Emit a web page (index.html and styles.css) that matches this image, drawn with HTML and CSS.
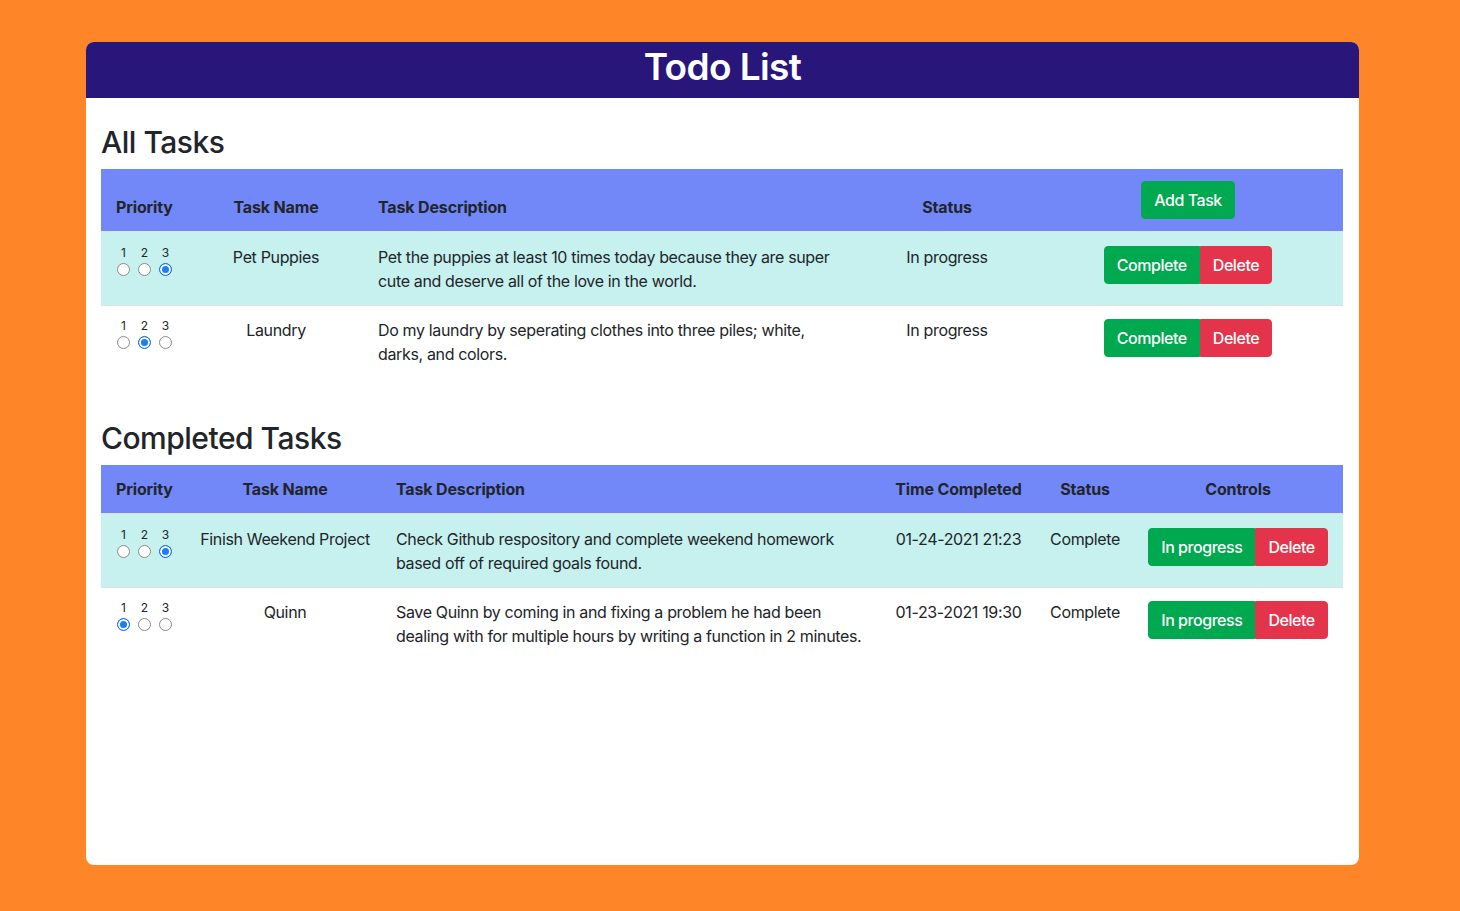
FILE: index.html
```html
<!DOCTYPE html>
<html>
<head>
<meta charset="utf-8">
<link rel="stylesheet" href="styles.css">
</head>
<body>
<div class="card">
  <header class="card-head"><h1>Todo List</h1></header>
  <div class="card-body">
    <section class="section">
      <h2>All Tasks</h2>
      <table class="tasks">
        <colgroup><col style="width:88px"><col style="width:174px"><col style="width:498px"><col style="width:172px"><col style="width:310px"></colgroup>
        <thead>
          <tr><th>Priority</th><th class="c">Task Name</th><th>Task Description</th><th class="c">Status</th><th class="c"><button class="btn green">Add Task</button></th></tr>
        </thead>
        <tbody>
          <tr class="hl">
            <td><div class="prio"><label class="opt"><span>1</span><input type="radio" name="a1"></label><label class="opt"><span>2</span><input type="radio" name="a1"></label><label class="opt"><span>3</span><input type="radio" name="a1" checked></label></div></td>
            <td class="c nw">Pet Puppies</td>
            <td>Pet the puppies at least 10 times today because they are super cute and deserve all of the love in the world.</td>
            <td class="c nw">In progress</td>
            <td class="c"><div class="grp"><button class="btn green">Complete</button><button class="btn red">Delete</button></div></td>
          </tr>
          <tr>
            <td><div class="prio"><label class="opt"><span>1</span><input type="radio" name="a2"></label><label class="opt"><span>2</span><input type="radio" name="a2" checked></label><label class="opt"><span>3</span><input type="radio" name="a2"></label></div></td>
            <td class="c nw">Laundry</td>
            <td>Do my laundry by seperating clothes into three piles; white, darks, and colors.</td>
            <td class="c nw">In progress</td>
            <td class="c"><div class="grp"><button class="btn green">Complete</button><button class="btn red">Delete</button></div></td>
          </tr>
        </tbody>
      </table>
    </section>
    <section class="section">
      <h2>Completed Tasks</h2>
      <table class="tasks">
        <colgroup><col style="width:88px"><col style="width:192px"><col style="width:499px"><col style="width:157px"><col style="width:96px"><col style="width:210px"></colgroup>
        <thead>
          <tr><th>Priority</th><th class="c">Task Name</th><th>Task Description</th><th class="c nw">Time Completed</th><th class="c">Status</th><th class="c">Controls</th></tr>
        </thead>
        <tbody>
          <tr class="hl">
            <td><div class="prio"><label class="opt"><span>1</span><input type="radio" name="b1"></label><label class="opt"><span>2</span><input type="radio" name="b1"></label><label class="opt"><span>3</span><input type="radio" name="b1" checked></label></div></td>
            <td class="c nw tight">Finish Weekend Project</td>
            <td>Check Github respository and complete weekend homework based off of required goals found.</td>
            <td class="c nw">01-24-2021 21:23</td>
            <td class="c nw tight">Complete</td>
            <td class="c"><div class="grp"><button class="btn green">In progress</button><button class="btn red">Delete</button></div></td>
          </tr>
          <tr>
            <td><div class="prio"><label class="opt"><span>1</span><input type="radio" name="b2" checked></label><label class="opt"><span>2</span><input type="radio" name="b2"></label><label class="opt"><span>3</span><input type="radio" name="b2"></label></div></td>
            <td class="c nw tight">Quinn</td>
            <td>Save Quinn by coming in and fixing a problem he had been dealing with for multiple hours by writing a function in 2 minutes.</td>
            <td class="c nw">01-23-2021 19:30</td>
            <td class="c nw tight">Complete</td>
            <td class="c"><div class="grp"><button class="btn green">In progress</button><button class="btn red">Delete</button></div></td>
          </tr>
        </tbody>
      </table>
    </section>
  </div>
</div>
</body>
</html>
```
FILE: styles.css
```css
html, body {
  margin: 0;
  padding: 0;
}
body {
  background: #ff8529;
  font-family: Inter, "Noto Sans", sans-serif;
  font-size: 16px;
  line-height: 24px;
  color: #212529;
  padding: 42px 0 46px 86px;
}
.card {
  width: 1273px;
  height: 823px;
  background: #fff;
  border-radius: 8px;
  overflow: hidden;
}
.card-head {
  background: #29167a;
  height: 56px;
}
.card-head h1 {
  margin: 0;
  text-align: center;
  color: #fff;
  font-size: 37px;
  font-weight: 600;
  line-height: 50px;
  letter-spacing: -0.6px;
}
.card-body {
  padding: 0 16px 0 15px;
}
.section {
  padding-top: 25px;
}
.section h2 {
  margin: 0 0 8px;
  font-size: 30px;
  font-weight: 500;
  line-height: 38px;
  letter-spacing: -0.5px;
}
.tasks {
  width: 1242px;
  table-layout: fixed;
  border-collapse: collapse;
  margin-bottom: 16px;
}
.tasks th, .tasks td {
  padding: 12px 15px;
  text-align: left;
  vertical-align: top;
  letter-spacing: -0.35px;
}
.tasks td {
  padding-top: 13px;
  border-top: 1px solid #dee2e6;
}
.tasks tbody tr:last-child td {
  padding-top: 12px;
}
.tasks th {
  background: #7288f8;
  font-weight: 700;
  vertical-align: bottom;
  letter-spacing: -0.15px;
}
.tasks .c {
  text-align: center;
}
.tasks .nw {
  white-space: nowrap;
}
.tasks .tight {
  padding-left: 6px;
  padding-right: 6px;
}
.tasks tr.hl td {
  background: #c7f1ef;
}
.prio {
  display: flex;
  gap: 8px;
  margin: 1px 0 0 1px;
}
.opt {
  display: flex;
  flex-direction: column;
  align-items: center;
  width: 13px;
}
.opt span {
  font-size: 12px;
  line-height: 14px;
  letter-spacing: 0;
}
.opt input {
  appearance: none;
  -webkit-appearance: none;
  width: 13px;
  height: 13px;
  margin: 3px 0 0;
  border: 1px solid #8a8a8a;
  border-radius: 50%;
  background: #fff;
  box-sizing: border-box;
}
.opt input:checked {
  border: 1px solid #0a6ff5;
  background: #1a7dff;
  box-shadow: inset 0 0 0 2px #fff;
}
.grp {
  display: inline-flex;
  margin-top: 1px;
}
.btn {
  font-family: inherit;
  font-size: 16px;
  line-height: 24px;
  font-weight: 500;
  color: #fff;
  border: 1px solid transparent;
  padding: 6px 12px;
  border-radius: 4px;
  letter-spacing: -0.45px;
  white-space: nowrap;
  cursor: pointer;
}
.green {
  background: #00a84f;
  border-color: #00a84f;
}
.red {
  background: #e3344b;
  border-color: #e3344b;
}
.grp .btn:first-child {
  border-top-right-radius: 0;
  border-bottom-right-radius: 0;
}
.grp .btn:last-child {
  border-top-left-radius: 0;
  border-bottom-left-radius: 0;
}
```
